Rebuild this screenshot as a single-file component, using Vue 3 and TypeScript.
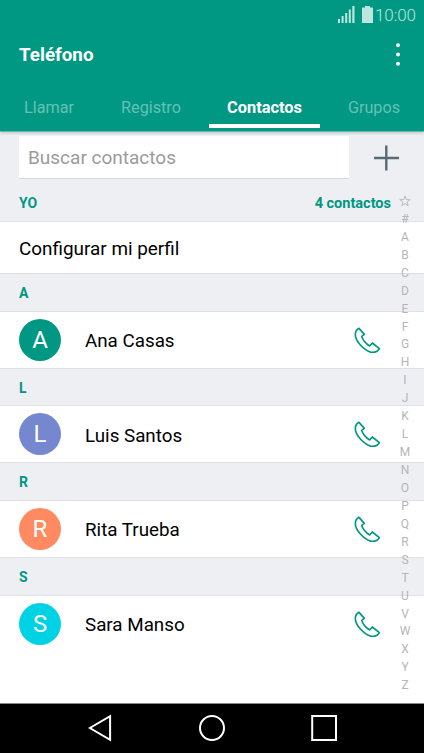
<script setup lang="ts">
interface Contact {
  name: string
  initial: string
  tone: string
}

const tabs: string[] = ['Llamar', 'Registro', 'Contactos', 'Grupos']
const activeTab = 'Contactos'
const contacts: Contact[] = [
  { name: 'Ana Casas', initial: 'A', tone: 'teal' },
  { name: 'Luis Santos', initial: 'L', tone: 'indigo' },
  { name: 'Rita Trueba', initial: 'R', tone: 'coral' },
  { name: 'Sara Manso', initial: 'S', tone: 'cyan' },
]
const letters: string[] = '#ABCDEFGHIJKLMNOPQRSTUVWXYZ'.split('')
</script>

<template>
  <div class="phone">
    <header class="top">
      <div class="status">
        <svg class="signal" width="17" height="17" viewBox="0 0 17 17">
          <path d="M0 13h2v4H0zM3.6 10h2v7h-2zM7.2 7h2v10h-2zM10.8 3.5h2V17h-2zM14.3 0h2.2v17h-2.2z" />
        </svg>
        <svg class="battery" width="11" height="17" viewBox="0 0 11 17">
          <path d="M3 0h5v1.5h3V17H0V1.5h3z" />
        </svg>
        <span class="clock">10:00</span>
      </div>
      <div class="title-row">
        <h1>Teléfono</h1>
        <svg class="more" width="6" height="24" viewBox="0 0 6 24">
          <circle cx="3" cy="2.2" r="2" /><circle cx="3" cy="11.5" r="2" /><circle cx="3" cy="20.8" r="2" />
        </svg>
      </div>
      <nav class="tabs">
        <div v-for="t in tabs" :key="t" class="tab" :class="{ active: t === activeTab }">
          <span>{{ t }}</span>
        </div>
      </nav>
    </header>

    <main class="content">
      <div class="search">
        <div class="field">Buscar contactos</div>
        <svg class="add" width="26" height="26" viewBox="0 0 26 26">
          <path d="M13.3 0.5v25M1 13h25" />
        </svg>
      </div>
      <div class="section me">
        <span>YO</span><span class="count">4 contactos</span>
      </div>
      <div class="profile">Configurar mi perfil</div>

      <template v-for="c in contacts" :key="c.name">
        <div class="section">{{ c.initial }}</div>
        <div class="row">
          <div class="avatar" :class="c.tone">{{ c.initial }}</div>
          <span class="name">{{ c.name }}</span>
          <svg class="call" width="26" height="26" viewBox="0 0 78 78">
            <path d="M15 4L31 22L23 28C27 41 37 51 47 57L55 48L76 65C71 74 60 77 51 76C29 69 4 42 4 23C4 14 9 7 15 4Z" />
          </svg>
        </div>
      </template>

      <div class="index">
        <div class="mark">
          <svg width="12" height="12" viewBox="0 0 12 12">
            <path d="M6 .9L7.3 4.6L11.2 4.7L8.1 7.1L9.2 10.9L6 8.6L2.8 10.9L3.9 7.1L.8 4.7L4.7 4.6Z" />
          </svg>
        </div>
        <div v-for="l in letters" :key="l" class="mark">{{ l }}</div>
      </div>
    </main>

    <footer class="navbar">
      <svg width="24" height="28" viewBox="0 0 24 28"><path d="M22.1 2.2V25.8L1.8 14Z" /></svg>
      <svg class="home" width="28" height="28" viewBox="0 0 28 28"><circle cx="14" cy="14" r="12" /></svg>
      <svg width="28" height="28" viewBox="0 0 28 28"><path d="M2.2 2H26V26H2.2Z" /></svg>
    </footer>
  </div>
</template>

<style>
body {
  overflow: hidden;
}
</style>

<style scoped>
.phone {
  width: 424px;
  height: 753px;
  display: flex;
  flex-direction: column;
  background: #fff;
  font-family: Roboto, sans-serif;
  color: #000;
}
.top {
  height: 131px;
  flex: none;
  background: #009783;
  border-bottom: 1px solid #68b9ae;
  box-shadow: 0 1px 3px rgba(0, 0, 0, 0.2);
  position: relative;
  z-index: 1;
}
.status {
  height: 30px;
  display: flex;
  justify-content: flex-end;
  align-items: center;
  padding-right: 8px;
  color: #bfe5e0;
  fill: #bfe5e0;
}
.signal {
  margin-top: -2px;
}
.battery {
  margin: -2px 2px 0 7px;
}
.clock {
  font-size: 17px;
  line-height: 30px;
  width: 41px;
  font-weight: 300;
  letter-spacing: -0.1px;
}
.title-row {
  height: 50px;
  display: flex;
  justify-content: space-between;
  align-items: center;
  padding: 0 23px 0 19px;
}
h1 {
  margin: 0;
  font-size: 18.8px;
  font-weight: 700;
  color: #fff;
}
.more {
  fill: #fff;
}
.tabs {
  height: 48px;
  display: flex;
}
.tab {
  width: 98px;
  flex: none;
  display: flex;
  justify-content: center;
  color: #66c1b5;
  font-size: 16.2px;
  line-height: 55px;
}
.tab:nth-child(2) {
  width: 106px;
}
.tab:nth-child(3) {
  width: 111px;
  margin-left: 5px;
}
.tab:nth-child(4) {
  width: 108px;
}
.tab.active {
  box-sizing: border-box;
  color: #fff;
  font-weight: 700;
  font-size: 16.4px;
  border-bottom: 4px solid #fff;
}
.content {
  height: 571px;
  position: relative;
}
.search {
  height: 53px;
  background: #eeeff3;
  display: flex;
  align-items: flex-start;
}
.field {
  box-sizing: border-box;
  width: 330px;
  height: 43px;
  margin: 4px 0 0 19px;
  padding-left: 9px;
  background: #fff;
  border-bottom: 1px solid #d8d9dc;
  color: #9b9b9b;
  font-size: 19px;
  line-height: 44px;
}
.add {
  margin: 13px 0 0 24px;
  stroke: #586b74;
  stroke-width: 2.4;
}
.section {
  box-sizing: border-box;
  height: 37.7px;
  padding: 0 19px;
  background: #eeeff3;
  border-bottom: 1px solid #e0e1e4;
  color: #009783;
  font-size: 14px;
  font-weight: 700;
  line-height: 38px;
}
.section.me {
  height: 37px;
  display: flex;
  justify-content: space-between;
  padding-right: 33px;
  line-height: 36px;
}
.count {
  font-size: 14.5px;
  line-height: 37px;
}
.profile {
  box-sizing: border-box;
  height: 52px;
  padding-left: 19px;
  border-bottom: 1px solid #dcdcdf;
  font-size: 18.9px;
  line-height: 53px;
}
.row {
  box-sizing: border-box;
  height: 57px;
  display: flex;
  align-items: center;
  padding: 0 44px 0 19px;
  border-bottom: 1px solid #e0e1e4;
}
.row:nth-last-child(2) {
  border-bottom-color: transparent;
}
.avatar {
  width: 42px;
  height: 42px;
  border-radius: 50%;
  color: #fff;
  font-size: 24px;
  line-height: 43px;
  text-align: center;
}
.teal {
  background: #009783;
}
.indigo {
  background: #7487cf;
}
.coral {
  background: #ff8a62;
}
.cyan {
  background: #00d2e5;
}
.name {
  margin-left: 24px;
  flex: 1;
  font-size: 18.8px;
  padding-top: 2.4px;
}
.call {
  fill: none;
  stroke: #009783;
  stroke-width: 5;
  stroke-linejoin: round;
}
.index {
  position: absolute;
  top: 60px;
  right: 9px;
  width: 20px;
}
.mark {
  height: 17.95px;
  display: flex;
  justify-content: center;
  align-items: center;
  color: #b5b5b8;
  font-size: 12px;
}
.mark svg {
  fill: none;
  stroke: #b5b5b8;
  stroke-width: 0.9;
}
.navbar {
  flex: 1;
  box-sizing: border-box;
  background: #000;
  border-top: 1px solid #888;
  display: flex;
  align-items: center;
  padding: 0 0 1px 88px;
  gap: 84px;
  fill: none;
  stroke: #fff;
  stroke-width: 2;
}
.home {
  margin-left: 2px;
}
</style>
